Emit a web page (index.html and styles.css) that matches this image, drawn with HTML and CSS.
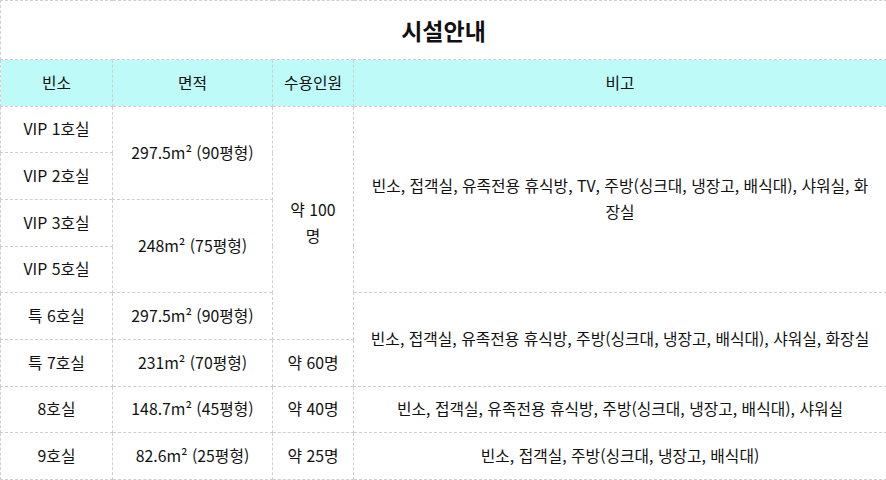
FILE: index.html
```html
<!DOCTYPE html>
<html lang="ko">
<head>
<meta charset="utf-8">
<title>시설안내</title>
<link rel="stylesheet" href="styles.css">
</head>
<body>
<table class="facility">
  <colgroup>
    <col class="c1"><col class="c2"><col class="c3"><col class="c4">
  </colgroup>
  <thead>
    <tr class="title-row"><th colspan="4" class="title">시설안내</th></tr>
    <tr class="head-row">
      <th>빈소</th><th>면적</th><th>수용인원</th><th>비고</th>
    </tr>
  </thead>
  <tbody>
    <tr>
      <td>VIP 1호실</td>
      <td rowspan="2">297.5m² (90평형)</td>
      <td rowspan="5" class="cap">약 100명</td>
      <td rowspan="4" class="note">빈소, 접객실, 유족전용 휴식방, TV, 주방(싱크대, 냉장고, 배식대), 샤워실, 화장실</td>
    </tr>
    <tr><td>VIP 2호실</td></tr>
    <tr>
      <td>VIP 3호실</td>
      <td rowspan="2">248m² (75평형)</td>
    </tr>
    <tr><td>VIP 5호실</td></tr>
    <tr>
      <td>특 6호실</td>
      <td>297.5m² (90평형)</td>
      <td rowspan="2" class="note">빈소, 접객실, 유족전용 휴식방, 주방(싱크대, 냉장고, 배식대), 샤워실, 화장실</td>
    </tr>
    <tr>
      <td>특 7호실</td>
      <td>231m² (70평형)</td>
      <td class="cap">약 60명</td>
    </tr>
    <tr>
      <td>8호실</td>
      <td>148.7m² (45평형)</td>
      <td class="cap">약 40명</td>
      <td class="note">빈소, 접객실, 유족전용 휴식방, 주방(싱크대, 냉장고, 배식대), 샤워실</td>
    </tr>
    <tr>
      <td>9호실</td>
      <td>82.6m² (25평형)</td>
      <td class="cap">약 25명</td>
      <td class="note">빈소, 접객실, 주방(싱크대, 냉장고, 배식대)</td>
    </tr>
  </tbody>
</table>
</body>
</html>
```

FILE: styles.css
```css
html, body {
  margin: 0;
  padding: 0;
  background: #fff;
}
body {
  font-family: "Noto Sans CJK KR", "Noto Sans", sans-serif;
  font-size: 15.8px;
  color: #111;
}
.facility {
  width: 886px;
  border-collapse: collapse;
  table-layout: fixed;
}
.c1 { width: 112px; }
.c2 { width: 160px; }
.c3 { width: 81px; }
.c4 { width: 533px; }
.facility th,
.facility td {
  border: 1px dashed #cfcfcf;
  text-align: center;
  vertical-align: middle;
  padding: 0 8px;
  line-height: 26px;
  font-weight: 400;
}
.facility td.cap {
  padding: 0 12px;
}
.facility td.note {
  padding: 0 16px;
}
.title-row th {
  height: 58px;
  font-size: 23px;
  font-weight: 700;
  color: #111;
  padding: 0;
}
.head-row th {
  background: #bdfaf8;
}
.facility tr {
  height: 46.67px;
}
.facility tr.title-row {
  height: 59px;
}
```
